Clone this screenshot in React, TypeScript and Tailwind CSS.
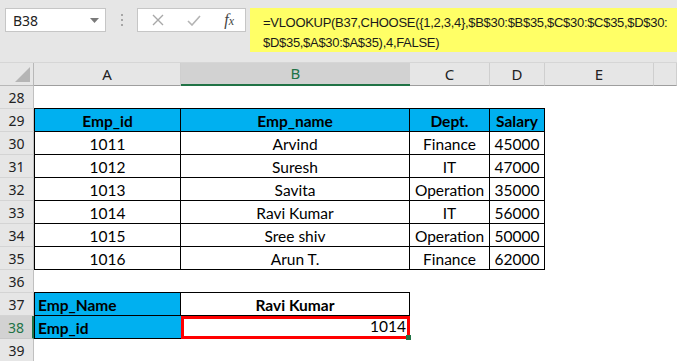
import React from 'react'

const COLS = ['A', 'B', 'C', 'D', 'E', '']

type Cell = { text?: string; bold?: boolean; align?: 'left' | 'center' | 'right' }

const TABLE: Record<number, Cell[]> = {
  29: [
    { text: 'Emp_id', bold: true },
    { text: 'Emp_name', bold: true },
    { text: 'Dept.', bold: true },
    { text: 'Salary', bold: true },
  ],
  30: [{ text: '1011' }, { text: 'Arvind' }, { text: 'Finance' }, { text: '45000' }],
  31: [{ text: '1012' }, { text: 'Suresh' }, { text: 'IT' }, { text: '47000' }],
  32: [{ text: '1013' }, { text: 'Savita' }, { text: 'Operation' }, { text: '35000' }],
  33: [{ text: '1014' }, { text: 'Ravi Kumar' }, { text: 'IT' }, { text: '56000' }],
  34: [{ text: '1015' }, { text: 'Sree shiv' }, { text: 'Operation' }, { text: '50000' }],
  35: [{ text: '1016' }, { text: 'Arun T.' }, { text: 'Finance' }, { text: '62000' }],
  37: [{ text: 'Emp_Name', bold: true, align: 'left' }, { text: 'Ravi Kumar', bold: true }],
  38: [{ text: 'Emp_id', bold: true, align: 'left' }, { text: '1014', align: 'right' }],
}

const ROWS = [28, 29, 30, 31, 32, 33, 34, 35, 36, 37, 38, 39]

function cellClass(r: number, c: number) {
  const inT1 = r >= 29 && r <= 35 && c >= 1 && c <= 4
  const inT2 = r >= 37 && r <= 38 && c >= 1 && c <= 2
  const blue = (r === 29 && c >= 1 && c <= 4) || (inT2 && c === 1)
  let cls = blue ? 'bg-[#00b0f0] ' : 'bg-white '
  if (r === 38 && c === 2) return 'bg-white border-[3px] border-[#ff0000] relative'
  if (inT1 || inT2) {
    cls += 'border-b border-black '
    if (!(r === 38 && c === 1)) cls += 'border-r '
    if (c === 1) cls += 'border-l '
  } else if ((r === 28 && c >= 1 && c <= 4) || (r === 36 && c >= 1 && c <= 2)) {
    cls += 'border-b border-black '
  }
  return cls
}

function NameBox() {
  return (
    <div className="shrink-0 w-[101px] h-[24px] bg-white border border-[#c6c6c6] flex items-center justify-between pl-[7px] pr-[6px]">
      <span className="font-['Noto_Sans',sans-serif] text-[14px] text-[#222]">B38</span>
      <svg width="9" height="5" viewBox="0 0 9 5">
        <path d="M0 0h9L4.5 5z" fill="#7a7a7a" />
      </svg>
    </div>
  )
}

function FormulaButtons() {
  return (
    <div className="shrink-0 w-[109px] h-[24px] bg-white border border-[#c6c6c6] flex items-center justify-between pl-[14px] pr-[11px]">
      <svg width="12" height="12" viewBox="0 0 12 12">
        <path d="M1 1l10 10M11 1L1 11" stroke="#a8a8a8" strokeWidth="1.4" />
      </svg>
      <svg width="14" height="11" viewBox="0 0 14 11">
        <path d="M1 6l4 4 8-9" stroke="#b4b4b4" strokeWidth="1.6" fill="none" />
      </svg>
      <span className="font-['Liberation_Serif',serif] italic text-[16px] text-[#444] leading-none">
        f<span className="text-[12px]">x</span>
      </span>
    </div>
  )
}

export default function App() {
  return (
    <div className="w-[677px] h-[361px] overflow-hidden bg-white">
      {/* toolbar */}
      <div className="h-[63px] bg-[#e6e6e6] border-b border-[#d6d6d6] flex items-start pt-2 pl-[5px]">
        <NameBox />
        <div className="shrink-0 w-[31px] h-[24px] flex flex-col items-center justify-center gap-[3px]">
          <span className="w-[2px] h-[2px] bg-[#a6a6a6]" />
          <span className="w-[2px] h-[2px] bg-[#a6a6a6]" />
          <span className="w-[2px] h-[2px] bg-[#a6a6a6]" />
        </div>
        <FormulaButtons />
        <div className="ml-1 flex-1 min-w-0 overflow-hidden h-[44px] bg-[#ffff66] pl-[13px] pt-[5px] font-['Liberation_Sans',sans-serif] text-[13px] tracking-[-0.3px] leading-[20px] text-[#1a1a1a] whitespace-nowrap">
          <div>=VLOOKUP(B37,CHOOSE({'{'}1,2,3,4{'}'},$B$30:$B$35,$C$30:$C$35,$D$30:</div>
          <div>$D$35,$A$30:$A$35),4,FALSE)</div>
        </div>
      </div>

      {/* sheet */}
      <div className="grid grid-cols-[34px_147px_229px_80px_55px_109px_1fr]">
        {/* column headers */}
        <div className="h-[23px] bg-[#e6e6e6] border-b border-r border-[#b8b8b8] flex items-end justify-end pr-[3px] pb-[3px]">
          <svg width="15" height="15" viewBox="0 0 15 15">
            <path d="M15 0V15H0z" fill="#b5b5b5" />
          </svg>
        </div>
        {COLS.map((c) => (
          <div
            key={c || 'F'}
            className={
              c === 'B'
                ? "h-[23px] bg-[#d2d2d2] border-b-2 border-[#217346] flex items-center justify-center font-['Noto_Sans',sans-serif] text-[15px] text-[#217346]"
                : "h-[23px] bg-[#e6e6e6] border-b border-r border-b-[#9e9e9e] border-r-[#cfcfcf] flex items-center justify-center font-['Noto_Sans',sans-serif] text-[15px] text-[#222]"
            }
          >
            {c}
          </div>
        ))}

        {ROWS.map((r) => (
          <React.Fragment key={r}>
            <div
              className={
                r === 38
                  ? "h-[23px] bg-[#d2d2d2] border-r-2 border-r-[#217346] border-b border-b-[#c8c8c8] flex items-center justify-center font-['Noto_Sans',sans-serif] text-[14px] text-[#217346]"
                  : "h-[23px] bg-[#e6e6e6] border-r border-b border-r-[#c0c0c0] border-b-[#d4d4d4] flex items-center justify-center font-['Noto_Sans',sans-serif] text-[14px] text-[#222]"
              }
            >
              {r}
            </div>
            {COLS.map((_, i) => {
              const c = i + 1
              const cell = TABLE[r]?.[i]
              const align = cell?.align ?? 'center'
              return (
                <div
                  key={c}
                  className={`h-[23px] flex items-end pb-px font-['Lato',sans-serif] text-[15.5px] leading-[18px] text-black whitespace-nowrap ${
                    align === 'left' ? 'justify-start pl-[3px]' : align === 'right' ? 'justify-end pr-[1px]' : 'justify-center'
                  } ${cell?.bold ? 'font-bold' : ''} ${cellClass(r, c)}`}
                >
                  {cell?.text}
                  {r === 38 && c === 2 && (
                    <span className="absolute -right-[4px] -bottom-[4px] w-[5px] h-[5px] bg-[#217346]" />
                  )}
                </div>
              )
            })}
          </React.Fragment>
        ))}
      </div>
    </div>
  )
}
